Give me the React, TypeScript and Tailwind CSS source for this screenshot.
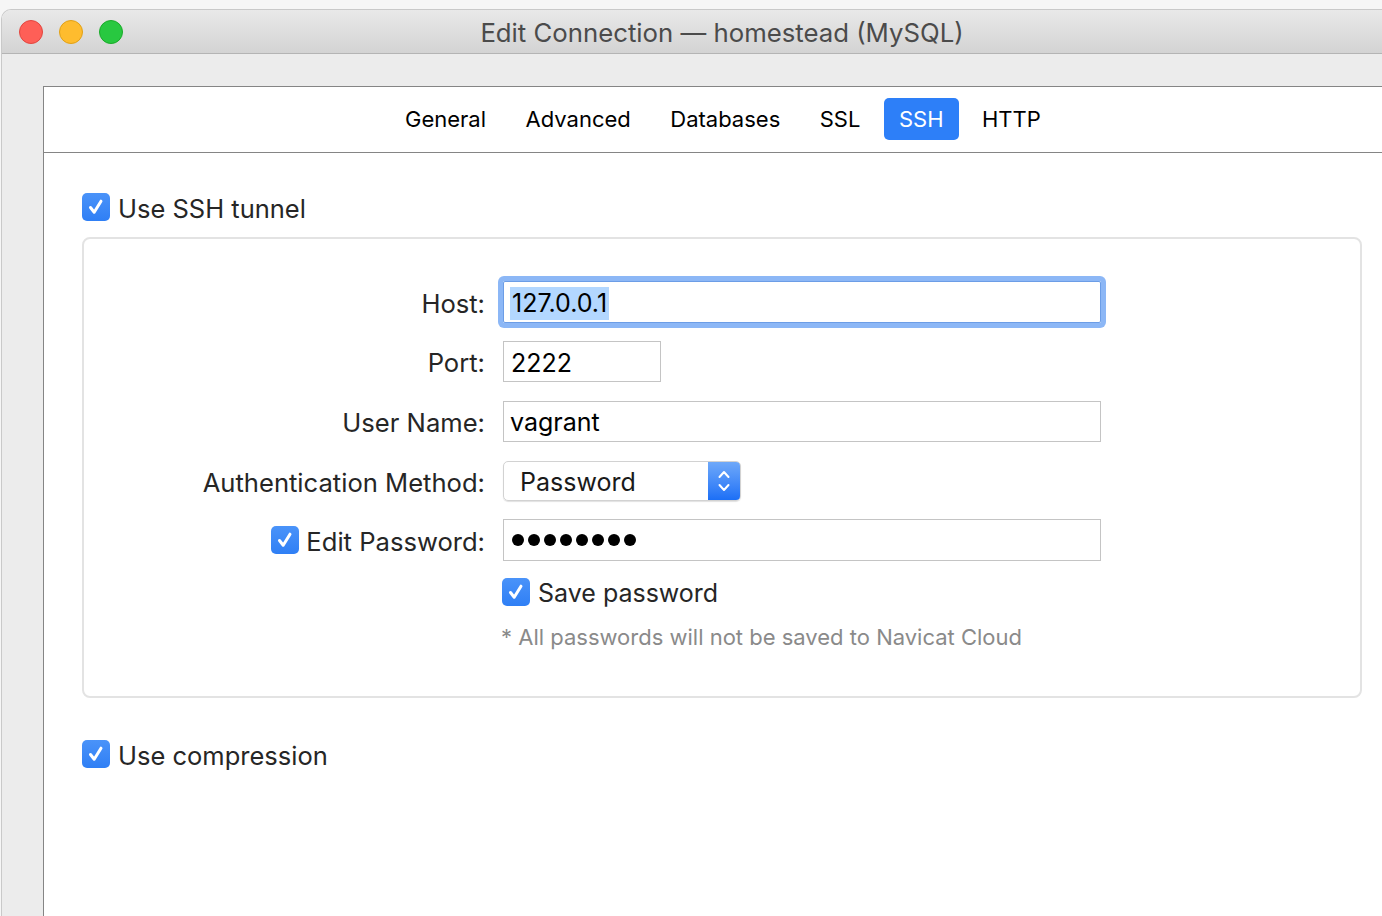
import React from 'react'

function Check({ className = '' }: { className?: string }) {
  return (
    <span className={`flex h-[28px] w-[28px] shrink-0 items-center justify-center rounded-[5px] bg-gradient-to-b from-[#4a93f9] to-[#2f7ff5] ${className}`}>
      <svg width="20" height="20" viewBox="0 0 20 20" fill="none">
        <path d="M4.5 10.5 L8.2 15.2 L15 4.2" stroke="white" strokeWidth="3" strokeLinecap="round" strokeLinejoin="round" />
      </svg>
    </span>
  )
}

const tabs = ['General', 'Advanced', 'Databases', 'SSL', 'SSH', 'HTTP']

function Row({ label, children, h = 'h-[60px]' }: { label: React.ReactNode; children?: React.ReactNode; h?: string }) {
  return (
    <div className={`flex items-center ${h}`}>
      <div className="flex w-[401px] shrink-0 items-center justify-end text-[25.6px] text-[#262626]">{label}</div>
      <div className="ml-[18px] flex items-center">{children}</div>
    </div>
  )
}

export default function App() {
  return (
    <div className="h-[916px] w-[1382px] overflow-hidden bg-[#f6f6f6] font-['Inter',sans-serif]">
      <div className="ml-[1px] mt-[9px] flex h-[907px] flex-col overflow-hidden rounded-tl-[10px] border-l border-t border-[#c9c9c9]">
        {/* Title bar */}
        <div className="relative flex h-[44px] shrink-0 items-center gap-[16px] border-b border-[#b4b4b4] bg-gradient-to-b from-[#e9e9e9] to-[#d3d3d3] pl-[17px]">
          <span className="h-[24px] w-[24px] rounded-full border border-[#e2463f] bg-[#fe5f57]" />
          <span className="h-[24px] w-[24px] rounded-full border border-[#e1a116] bg-[#febc2e]" />
          <span className="h-[24px] w-[24px] rounded-full border border-[#1aab29] bg-[#28c840]" />
          <div className="absolute inset-0 flex items-center justify-center pl-[60px] pt-[3px] text-[25.75px] text-[#4b4b4b]">
            Edit Connection — homestead (MySQL)
          </div>
        </div>

        {/* Window body */}
        <div className="flex-1 bg-[#ececec] pl-[41px] pt-[32px]">
          <div className="h-full border-l border-t border-[#858585] bg-white">
            {/* Tabs */}
            <div className="flex h-[66px] items-center gap-[7.5px] border-b border-[#858585] pb-[2px] pl-[345px]">
              {tabs.map((t) => (
                <div
                  key={t}
                  className={
                    t === 'SSH'
                      ? 'flex h-[42px] items-center rounded-[5px] bg-[#2d7ff8] px-[15px] pt-[2px] text-[22px] text-white'
                      : 'flex h-[42px] items-center px-[16px] pt-[2px] text-[22px] text-black'
                  }
                >
                  {t}
                </div>
              ))}
            </div>

            {/* Content */}
            <div className="pl-[38px] pt-[40px]">
              <div className="flex h-[28px] items-center gap-[8px] text-[25.5px] text-[#262626]">
                <Check />
                <span className="pt-[4px]">Use SSH tunnel</span>
              </div>

              <div className="mt-[16px] h-[461px] w-[1280px] rounded-[8px] border-2 border-[#e3e3e3] pt-[33px]">
                <Row label={<span className="pt-[4px]">Host:</span>}>
                  <div className="flex h-[42px] w-[598px] items-center rounded-[2px] border border-[#6c9de6] pl-[6px] pt-[3px] text-[25px] text-black shadow-[0_0_0_5px_#8cb7f6]">
                    <span className="bg-[#b3d7ff] px-[2px] leading-[33px]">127.0.0.1</span>
                  </div>
                </Row>
                <Row label={<span className="pt-[4px]">Port:</span>} h="h-[59px]">
                  <div className="flex h-[41px] w-[158px] items-center border border-[#c4c4c4] pl-[7px] pt-[4px] text-[25px] text-black">2222</div>
                </Row>
                <Row label={<span className="pt-[4px]">User Name:</span>}>
                  <div className="flex h-[41px] w-[598px] items-center border border-[#c4c4c4] pl-[6px] pt-[4px] text-[25px] text-black">vagrant</div>
                </Row>
                <Row label={<span className="pt-[4px]">Authentication Method:</span>}>
                  <div className="flex h-[40px] w-[238px] items-stretch overflow-hidden rounded-[5px] border border-[#d2d2d2] shadow-[0_1px_1px_rgba(0,0,0,0.12)]">
                    <div className="flex flex-1 items-center pl-[16px] pt-[4px] text-[25px] text-[#1a1a1a]">Password</div>
                    <div className="flex w-[32px] items-center justify-center bg-gradient-to-b from-[#6ea8f9] to-[#1b6ff6]">
                      <svg width="16" height="28" viewBox="0 0 16 28" fill="none">
                        <path d="M3.5 10 L8 5 L12.5 10" stroke="white" strokeWidth="2" strokeLinecap="round" strokeLinejoin="round" />
                        <path d="M3.5 18 L8 23 L12.5 18" stroke="white" strokeWidth="2" strokeLinecap="round" strokeLinejoin="round" />
                      </svg>
                    </div>
                  </div>
                </Row>
                <Row
                  h="h-[58px]"
                  label={
                    <span className="flex items-center gap-[7px]">
                      <Check />
                      <span className="pt-[4px]">Edit Password:</span>
                    </span>
                  }
                >
                  <div className="flex h-[42px] w-[598px] items-center gap-[4px] border border-[#c4c4c4] pl-[8px]">
                    {[0, 1, 2, 3, 4, 5, 6, 7].map((i) => (
                      <span key={i} className="h-[12px] w-[12px] rounded-full bg-black" />
                    ))}
                  </div>
                </Row>
                <Row label="" h="h-[45px]">
                  <div className="-ml-px flex items-center gap-[8px] text-[25px] text-[#262626]">
                    <Check />
                    <span className="pt-[4px]">Save password</span>
                  </div>
                </Row>
                <Row label="" h="h-[44px]">
                  <span className="-ml-[2px] pt-[3px] text-[22px] text-[#8a8a8a]">* All passwords will not be saved to Navicat Cloud</span>
                </Row>
              </div>

              <div className="mt-[42px] flex h-[28px] items-center gap-[8px] text-[25.5px] text-[#262626]">
                <Check />
                <span className="pt-[4px]">Use compression</span>
              </div>
            </div>
          </div>
        </div>
      </div>
    </div>
  )
}
